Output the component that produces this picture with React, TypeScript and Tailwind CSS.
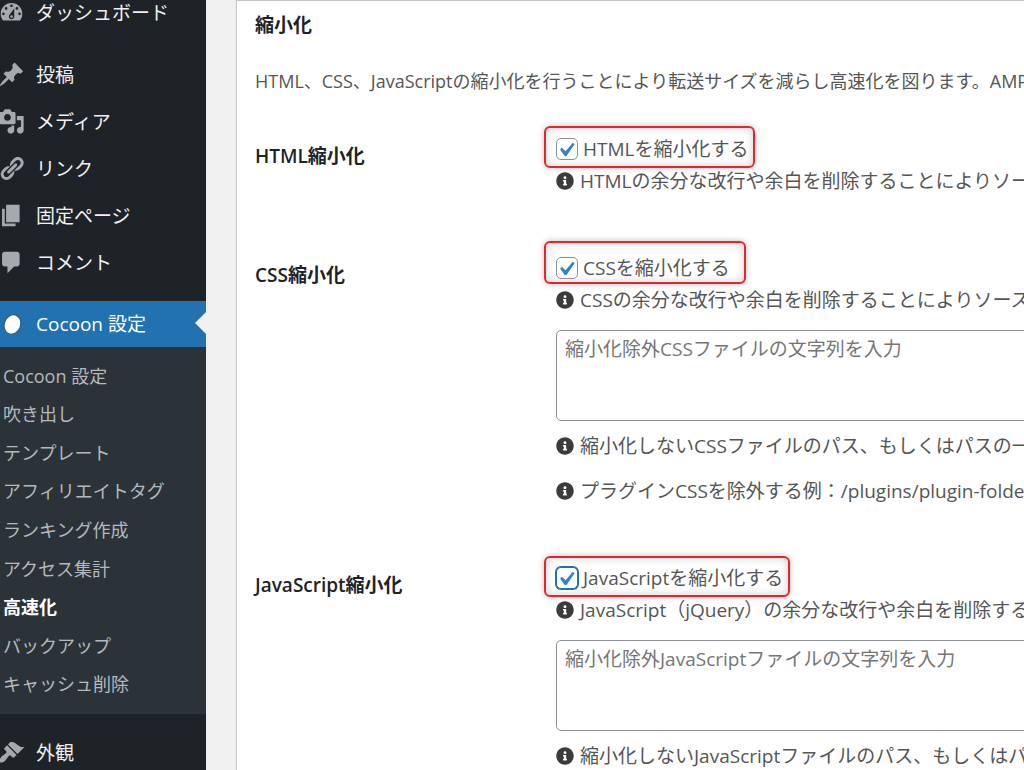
import React, { useState } from 'react';
import { FaInfoCircle } from 'react-icons/fa';

const ICONS = {
  dashboard:
    'M3.76 16h12.48c1.1-1.37 1.76-3.11 1.76-5 0-4.42-3.58-8-8-8s-8 3.58-8 8c0 1.89.66 3.63 1.76 5zM10 4c.55 0 1 .45 1 1s-.45 1-1 1-1-.45-1-1 .45-1 1-1zM6 6c.55 0 1 .45 1 1s-.45 1-1 1-1-.45-1-1 .45-1 1-1zm8 0c.55 0 1 .45 1 1s-.45 1-1 1-1-.45-1-1 .45-1 1-1zm-5.37 5.55L12 7v6c0 1.1-.9 2-2 2s-2-.9-2-2c0-.57.24-1.08.63-1.45zM4 10c.55 0 1 .45 1 1s-.45 1-1 1-1-.45-1-1 .45-1 1-1zm12 0c.55 0 1 .45 1 1s-.45 1-1 1-1-.45-1-1 .45-1 1-1zm-5 3c0-.55-.45-1-1-1s-1 .45-1 1 .45 1 1 1 1-.45 1-1z',
  post:
    'M10.44 3.02l1.82-1.82 6.36 6.35-1.83 1.82c-1.05-.68-2.48-.57-3.41.36l-.75.75c-.92.93-1.04 2.35-.35 3.41l-1.83 1.82-2.41-2.41-2.8 2.79c-.42.42-3.38 2.71-3.8 2.29s1.86-3.39 2.28-3.81l2.79-2.79L4.1 9.36l1.83-1.82c1.05.69 2.48.57 3.4-.36l.75-.75c.93-.92 1.05-2.35.36-3.41z',
  media:
    'M13 11V4c0-.55-.45-1-1-1h-1.67L9 1H5L3.67 3H2c-.55 0-1 .45-1 1v7c0 .55.45 1 1 1h10c.55 0 1-.45 1-1zM7 4.5c1.38 0 2.5 1.12 2.5 2.5S8.38 9.5 7 9.5 4.5 8.38 4.5 7 5.62 4.5 7 4.5zM14 6h5v10.5c0 1.38-1.12 2.5-2.5 2.5S14 17.88 14 16.5s1.12-2.5 2.5-2.5c.17 0 .34.02.5.05V9h-3V6zm-4 8.05V13h2v3.5c0 1.38-1.12 2.5-2.5 2.5S7 17.88 7 16.5 8.12 14 9.5 14c.17 0 .34.02.5.05z',
  links:
    'M17.74 2.76c1.68 1.69 1.68 4.41 0 6.1l-1.53 1.52c-1.12 1.12-2.7 1.47-4.14 1.09l2.62-2.61.76-.77.76-.76c.84-.84.84-2.2 0-3.04-.84-.85-2.2-.85-3.04 0l-.77.76-3.38 3.38c-.37-1.44-.02-3.02 1.1-4.14l1.52-1.53c1.69-1.68 4.42-1.68 6.1 0zM8.59 13.43l5.34-5.34c.42-.42.42-1.1 0-1.52-.44-.43-1.13-.39-1.53 0l-5.33 5.34c-.42.42-.42 1.1 0 1.52.44.43 1.13.39 1.52 0zm-.76 2.29l4.14-4.15c.38 1.44.03 3.02-1.09 4.14l-1.52 1.53c-1.69 1.68-4.41 1.68-6.1 0-1.68-1.68-1.68-4.42 0-6.1l1.53-1.52c1.12-1.12 2.7-1.47 4.14-1.1l-4.14 4.15c-.85.84-.85 2.2 0 3.05.84.84 2.2.84 3.04 0z',
  page: 'M6 15V2h10v13H6zm-1 1h8v2H3V5h2v11z',
  comments: 'M5 2h9c1.1 0 2 .9 2 2v7c0 1.1-.9 2-2 2h-2l-5 5v-5H5c-1.1 0-2-.9-2-2V4c0-1.1.9-2 2-2z',
  appearance:
    'M14.48 11.06L7.41 3.99l1.5-1.5c.5-.56 2.3-.47 3.51.32 1.21.8 1.43 1.28 2.91 2.1 1.18.64 2.45 1.26 4.45.85zm-.71.71L6.7 4.7 4.93 6.47c-.39.39-.39 1.02 0 1.41l1.06 1.06c.39.39.39 1.03 0 1.42-.6.6-1.43 1.11-2.21 1.69-.35.26-.7.53-1.01.84C1.43 14.23.4 16.08 1.4 17.07c.99 1 2.84-.03 4.18-1.36.31-.31.58-.66.85-1.02.57-.78 1.08-1.61 1.69-2.21.39-.39 1.02-.39 1.41 0l1.06 1.06c.39.39 1.02.39 1.41 0z',
};

const MENU: { icon: keyof typeof ICONS; label: string }[] = [
  { icon: 'post', label: '投稿' },
  { icon: 'media', label: 'メディア' },
  { icon: 'links', label: 'リンク' },
  { icon: 'page', label: '固定ページ' },
  { icon: 'comments', label: 'コメント' },
];

const SUBMENU = [
  'Cocoon 設定',
  '吹き出し',
  'テンプレート',
  'アフィリエイトタグ',
  'ランキング作成',
  'アクセス集計',
  '高速化',
  'バックアップ',
  'キャッシュ削除',
];

const MenuItem: React.FC<{ icon: keyof typeof ICONS; label: string }> = ({ icon, label }) => (
  <a href="#" className="-ml-0.5 flex h-[47px] items-center gap-[11px] text-[19px] text-[#f0f0f1]">
    <svg viewBox="0 0 20 20" className="size-[27px] shrink-0 fill-[#a7aaad]" aria-hidden="true">
      <path fillRule="evenodd" d={ICONS[icon]} />
    </svg>
    <span className="pt-px">{label}</span>
  </a>
);

const Sidebar: React.FC = () => (
  <nav className="w-[206px] shrink-0 overflow-hidden whitespace-nowrap bg-[#1d2327]">
    <div className="-mt-[11px] mb-[15px]">
      <MenuItem icon="dashboard" label="ダッシュボード" />
    </div>

    {MENU.map((item) => (
      <MenuItem key={item.label} icon={item.icon} label={item.label} />
    ))}

    {/* Current section */}
    <a
      href="#"
      className="relative mt-[15px] flex h-[46px] items-center gap-[11px] bg-[#2271b1] text-[19px] text-white"
    >
      <svg viewBox="0 0 25 26" className="h-[26px] w-[25px] shrink-0" aria-hidden="true">
        <ellipse cx="12.5" cy="13.5" rx="8.2" ry="10" transform="rotate(20 12.5 13.5)" fill="#fff" stroke="#3d5a73" strokeWidth="1.2" />
      </svg>
      Cocoon 設定
      <svg viewBox="0 0 11 22" className="absolute right-0 top-[11px] h-[22px] w-[11px]" aria-hidden="true">
        <path d="M11 0v22L0 11z" fill="#f0f0f1" />
      </svg>
    </a>
    <ul className="grid h-[367px] auto-rows-fr bg-[#2c3338] py-[10px] pl-[3px] text-[18px]">
      {SUBMENU.map((label) => (
        <li key={label} className="flex items-center">
          <a href="#" className={label === '高速化' ? 'font-semibold text-white' : 'text-[#b4b9be]'}>
            {label}
          </a>
        </li>
      ))}
    </ul>

    <div className="mt-[15px]">
      <MenuItem icon="appearance" label="外観" />
    </div>
  </nav>
);

const Info: React.FC<{ className?: string; children: React.ReactNode }> = ({ className = '', children }) => (
  <p className={`flex h-8 items-center gap-[6px] ${className}`}>
    <FaInfoCircle size={18} className="shrink-0 text-[#3c3c3c]" />
    {children}
  </p>
);

interface CheckProps {
  id: string;
  label: string;
  frame: string;
  focused?: boolean;
}

const Check: React.FC<CheckProps> = ({ id, label, frame, focused }) => {
  const [checked, setChecked] = useState(true);
  const ring = focused ? 'border-[#2271b1] ring-1 ring-[#2271b1]' : 'border-[#8c8f94]';

  return (
    <div className="relative flex h-8 w-fit items-center">
      <span className={`pointer-events-none absolute -left-3 rounded-md border-2 border-[#e3262b] shadow-[0_0_6px_rgba(0,0,0,0.25),inset_0_0_8px_rgba(0,0,0,0.2)] ${frame}`} />
      <span className="relative size-[22px]">
        <input
          id={id}
          type="checkbox"
          checked={checked}
          onChange={(e) => setChecked(e.target.checked)}
          className={`block size-[22px] appearance-none rounded-[5px] border bg-white ${ring}`}
        />
        {checked && (
          <svg viewBox="0 0 20 20" className="pointer-events-none absolute -left-1 -top-0.5 size-7" aria-hidden="true">
            <path d="M14.83 4.89l1.34.94-5.81 8.38H9.02L5.78 9.67l1.34-1.25 2.57 2.4z" fill="#3582c4" />
          </svg>
        )}
      </span>
      <label htmlFor={id} className="relative pl-[5px]">
        {label}
      </label>
    </div>
  );
};

const Row: React.FC<{ title: string; children: React.ReactNode }> = ({ title, children }) => (
  <div className="grid grid-cols-[301px_1fr] pb-[55px]">
    <h3 className="pt-[7px] font-semibold leading-8 text-[#1d2327]">{title}</h3>
    <div>{children}</div>
  </div>
);

const Area: React.FC<{ label: string; placeholder: string }> = ({ label, placeholder }) => (
  <textarea
    aria-label={label}
    placeholder={placeholder}
    className="mt-[14px] block h-[91px] w-full resize-none rounded-[5px] border border-[#8c8f94] bg-white px-2 py-1 leading-7 placeholder:text-[#757575]"
  />
);

const App: React.FC = () => (
  <div className="flex h-screen overflow-hidden bg-[#f0f0f1] font-['Open_Sans','Noto_Sans_CJK_JP',sans-serif]">
    <Sidebar />

    <main className="ml-[30px] min-w-0 flex-1 overflow-hidden border-l border-t border-[#c3c4c7] bg-white pl-[18px]">
      <div className="min-w-[1000px] whitespace-nowrap text-[19px] text-[#555555]">
        <h2 className="pt-2 font-semibold leading-8 text-[#1d2327]">縮小化</h2>
        <p className="mb-9 mt-6 text-[18px] leading-8">
          HTML、CSS、JavaScriptの縮小化を行うことにより転送サイズを減らし高速化を図ります。AMPページでは無効になります。
        </p>

        <Row title="HTML縮小化">
          <Check id="minify-html" label="HTMLを縮小化する" frame="-top-[7px] h-[42px] w-[211px]" />
          <Info>HTMLの余分な改行や余白を削除することによりソースコードのサイズを減らします。</Info>
        </Row>

        <Row title="CSS縮小化">
          <Check id="minify-css" label="CSSを縮小化する" frame="-top-[11px] h-[43px] w-[202px]" />
          <Info>CSSの余分な改行や余白を削除することによりソースコードのサイズを減らします。</Info>
          <Area label="縮小化除外CSSファイル" placeholder="縮小化除外CSSファイルの文字列を入力" />
          <Info className="mt-[9px]">縮小化しないCSSファイルのパス、もしくはパスの一部を入力してください。</Info>
          <Info className="mt-[13px]">プラグインCSSを除外する例：/plugins/plugin-folder-name/</Info>
        </Row>

        <Row title="JavaScript縮小化">
          <Check id="minify-js" label="JavaScriptを縮小化する" frame="-top-[6px] h-[41px] w-[246px]" focused />
          <Info>JavaScript（jQuery）の余分な改行や余白を削除することによりソースコードのサイズを減らします。</Info>
          <Area label="縮小化除外JavaScriptファイル" placeholder="縮小化除外JavaScriptファイルの文字列を入力" />
          <Info className="mt-[9px]">縮小化しないJavaScriptファイルのパス、もしくはパスの一部を入力してください。</Info>
        </Row>
      </div>
    </main>
  </div>
);

export default App;
